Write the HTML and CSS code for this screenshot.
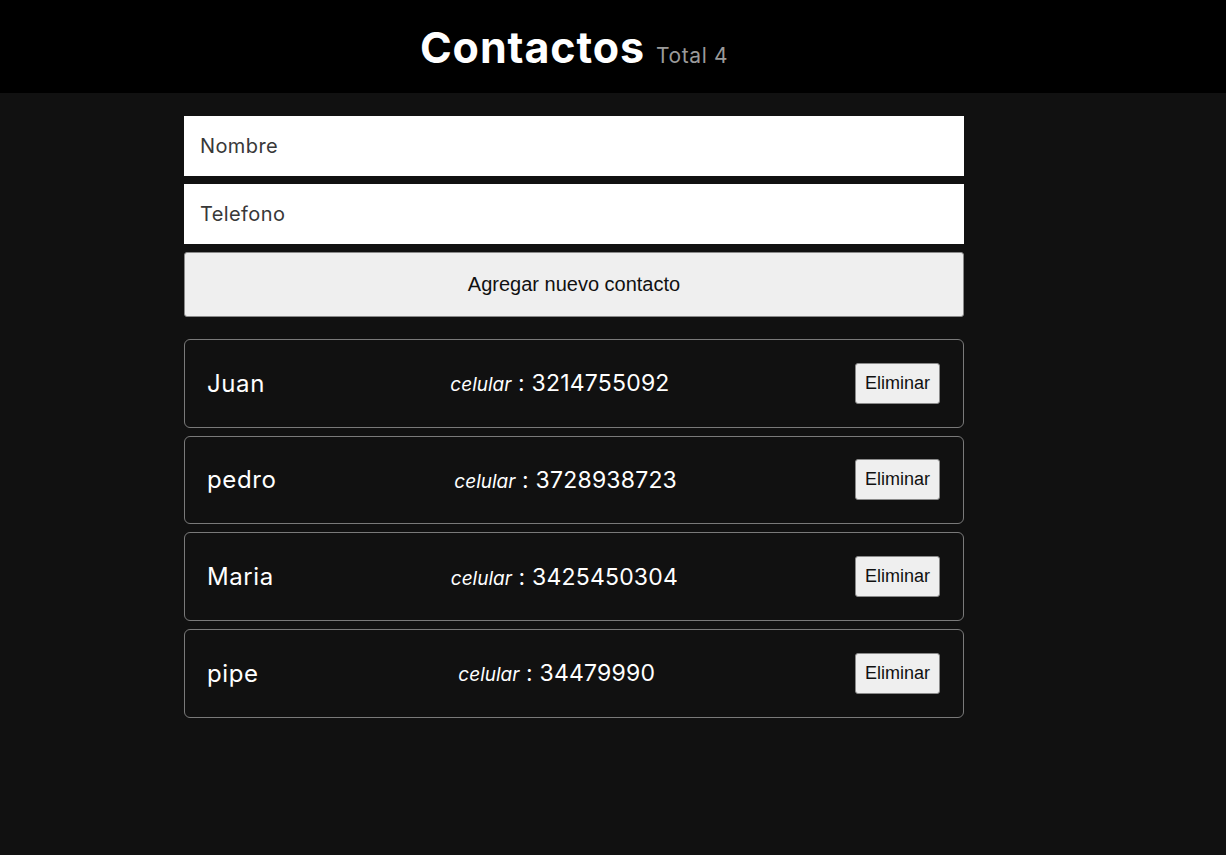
FILE: index.html
```html
<!DOCTYPE html>
<html lang="es">
<head>
<meta charset="utf-8">
<title>Contactos</title>
<link rel="stylesheet" href="styles.css">
</head>
<body>
<header class="top">
  <h1 class="title">Contactos <span class="total">Total 4</span></h1>
</header>
<main class="wrap">
  <form class="form">
    <input class="field" type="text" placeholder="Nombre">
    <input class="field" type="text" placeholder="Telefono">
    <button class="add" type="button">Agregar nuevo contacto</button>
  </form>
  <ul class="list">
    <li class="card">
      <span class="name">Juan</span>
      <span class="phone"><em class="label">celular</em> : 3214755092</span>
      <button class="del" type="button">Eliminar</button>
    </li>
    <li class="card">
      <span class="name">pedro</span>
      <span class="phone"><em class="label">celular</em> : 3728938723</span>
      <button class="del" type="button">Eliminar</button>
    </li>
    <li class="card">
      <span class="name">Maria</span>
      <span class="phone"><em class="label">celular</em> : 3425450304</span>
      <button class="del" type="button">Eliminar</button>
    </li>
    <li class="card">
      <span class="name">pipe</span>
      <span class="phone"><em class="label">celular</em> : 34479990</span>
      <button class="del" type="button">Eliminar</button>
    </li>
  </ul>
</main>
</body>
</html>
```
FILE: styles.css
```css
* { box-sizing: border-box; }
html, body { margin: 0; padding: 0; }
body {
  background: #111111;
  color: #ffffff;
  font-family: "Inter", "Open Sans", sans-serif;
  min-height: 855px;
}
.top {
  background: #000000;
  height: 93px;
  display: flex;
  align-items: center;
}
.title {
  width: 780px;
  margin: 0 0 0 184px;
  text-align: center;
  font-size: 43px;
  font-weight: 700;
  color: #ffffff;
  letter-spacing: 0.9px;
}
.total {
  font-size: 21px;
  font-weight: 400;
  color: #9a9a9a;
  letter-spacing: 0.6px;
}
.wrap {
  width: 780px;
  margin: 23px 0 0 184px;
}
.form {
  display: flex;
  flex-direction: column;
  gap: 8px;
  margin: 0 0 22px;
}
.field {
  height: 60px;
  border: none;
  background: #ffffff;
  padding: 0 16px;
  font-family: "Inter", "Open Sans", sans-serif;
  font-size: 20px;
  letter-spacing: 0.4px;
  color: #333;
  outline: none;
}
.field::placeholder { color: #383838; }
.add {
  height: 65px;
  background: #efefef;
  border: 1px solid #8a8a8a;
  border-radius: 3px;
  font-family: "Liberation Sans", Arial, sans-serif;
  font-size: 20px;
  color: #111;
}
.list {
  list-style: none;
  margin: 0;
  padding: 0;
  display: flex;
  flex-direction: column;
  gap: 8px;
}
.card {
  display: flex;
  align-items: center;
  justify-content: space-between;
  height: 88.67px;
  border: 1px solid #7a7a7a;
  border-radius: 6px;
  padding: 0 23px 0 22px;
}
.name {
  font-size: 24px;
  letter-spacing: 0.6px;
}
.phone {
  font-size: 23px;
  letter-spacing: 0.2px;
}
.label {
  font-size: 19px;
  letter-spacing: 0;
}
.del {
  height: 41px;
  padding: 0 9px;
  background: #efefef;
  border: 1px solid #8a8a8a;
  border-radius: 3px;
  font-family: "Liberation Sans", Arial, sans-serif;
  font-size: 18px;
  color: #111;
}
```
